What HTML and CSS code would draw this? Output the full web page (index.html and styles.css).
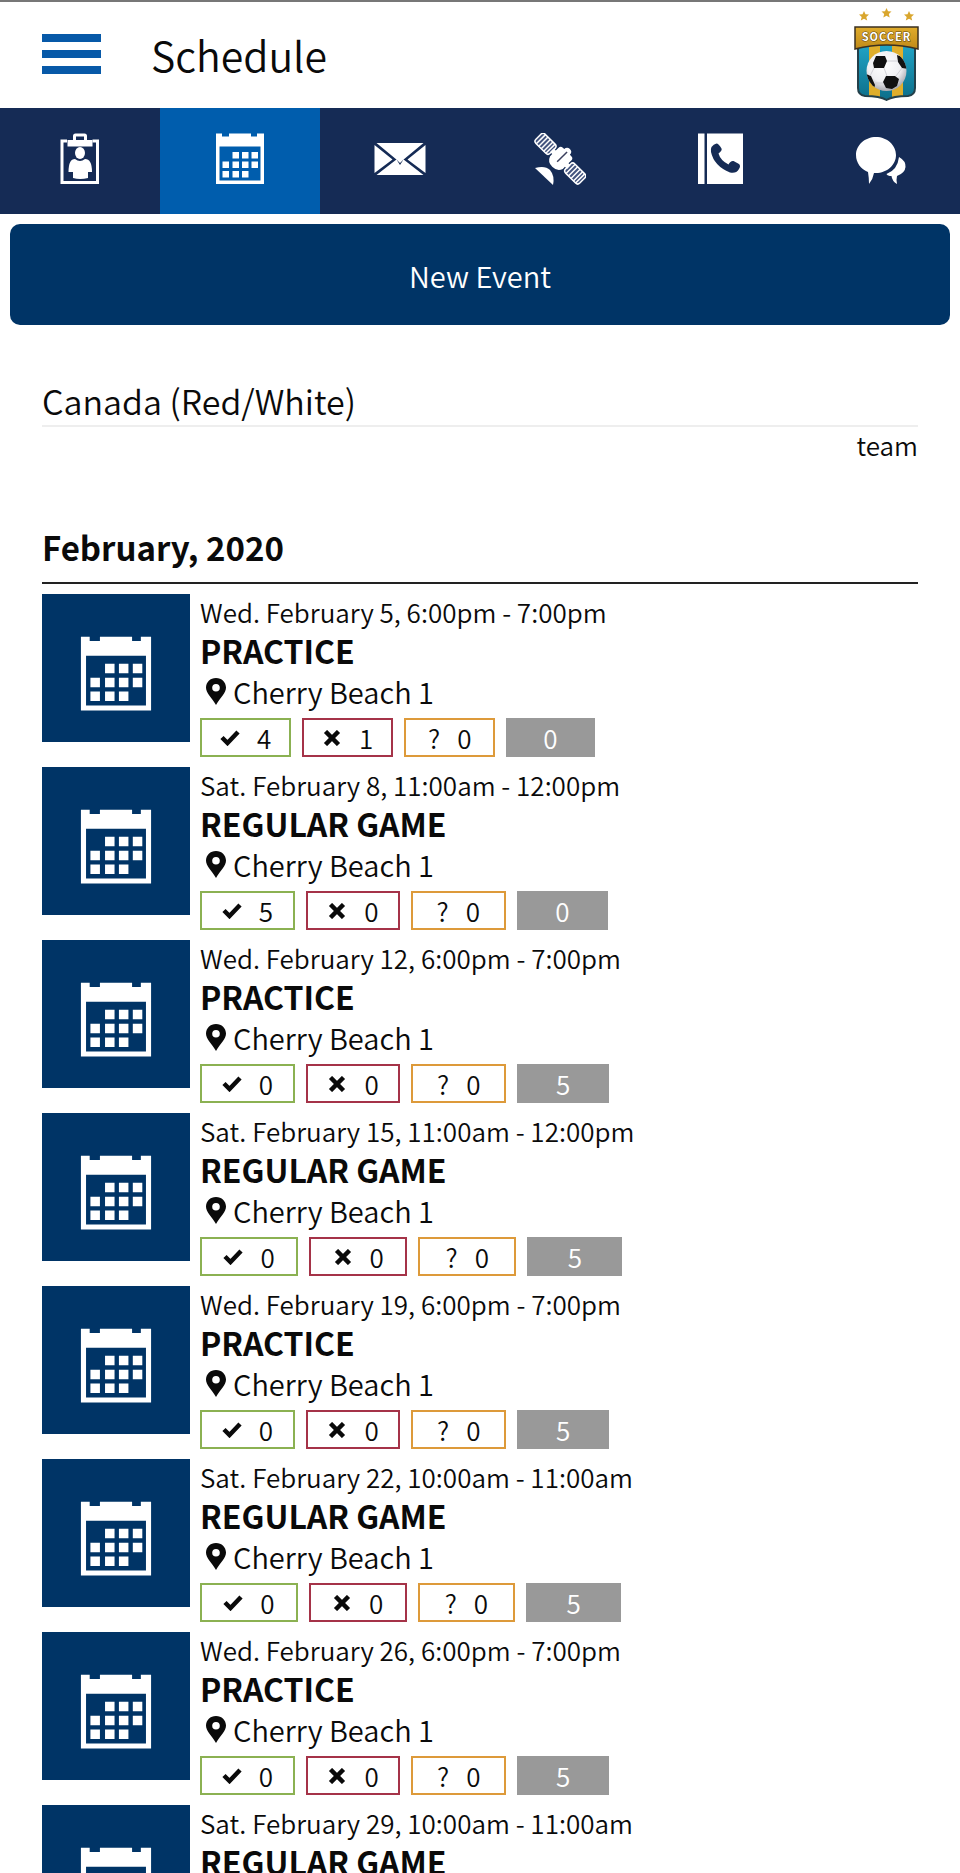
FILE: index.html
```
<!DOCTYPE html>
<html lang="en">
<head>
    <meta charset="UTF-8">
    <meta name="viewport" content="width=device-width, initial-scale=1.0">
    <title>Schedule</title>
    <link rel="stylesheet" href="styles.css">
</head>
<body>

    <!-- shared icons -->
    <svg class="icon-defs" aria-hidden="true">
        <symbol id="icon-calendar" viewBox="0 0 52 52">
            <path fill="currentColor" fill-rule="evenodd" d="M2 .5h6v3h7v-3h22v3h6v-3h7V51H2ZM5.500 13.500v34h41v-34Z"/>
            <path fill="currentColor" d="M18.500 19H25v6.500h-6.500ZM28 19h6.500v6.500H28ZM37.500 19H44v6.500h-6.500ZM8.500 28.500H15V35H8.500ZM18.500 28.500H25V35h-6.500ZM28 28.500h6.500V35H28ZM37.500 28.500H44V35h-6.500ZM8.500 38H15v6.500H8.500ZM18.500 38H25v6.500h-6.500ZM28 38h6.500v6.500H28Z"/>
        </symbol>
        <symbol id="icon-pin" viewBox="0 0 20 27">
            <path fill="currentColor" fill-rule="evenodd" d="M10 0C4.300 0 0 4.200 0 9.600 0 15 5.500 19.500 10 27c4.500-7.500 10-12 10-17.400C20 4.200 15.700 0 10 0Zm0 6a3.800 3.800 0 1 1 0 7.600A3.800 3.800 0 0 1 10 6Z"/>
        </symbol>
        <symbol id="icon-check" viewBox="0 0 20 16">
            <path fill="none" stroke="currentColor" stroke-width="4.500" d="M2 7.500 7.500 13 18 2"/>
        </symbol>
        <symbol id="icon-cross" viewBox="0 0 20 16">
            <path fill="none" stroke="currentColor" stroke-width="4.500" d="m3.500 1.500 13 13M16.500 1.500l-13 13"/>
        </symbol>
    </svg>

    <header class="top-bar">
        <button class="menu-btn" type="button" aria-label="Menu">
            <span></span>
            <span></span>
            <span></span>
        </button>
        <h1>Schedule</h1>
        <svg class="crest" viewBox="0 0 66 94" role="img" aria-label="Soccer team crest">
            <defs>
                <linearGradient id="gold" x1="0" y1="0" x2="0" y2="1">
                    <stop offset="0" stop-color="#e0ac2c"/>
                    <stop offset="1" stop-color="#c08a18"/>
                </linearGradient>
                <linearGradient id="blue" x1="0" y1="0" x2="0" y2="1">
                    <stop offset="0" stop-color="#20a5c8"/>
                    <stop offset="1" stop-color="#0c6d88"/>
                </linearGradient>
                <radialGradient id="ball" cx=".45" cy=".35" r=".65">
                    <stop offset="0" stop-color="#fff"/>
                    <stop offset=".65" stop-color="#efeff2"/>
                    <stop offset="1" stop-color="#a9a9b0"/>
                </radialGradient>
                <clipPath id="shield">
                    <path d="M5 38h57v43q0 7-7 8-15 0-21.500 4Q27 89 12 89q-7-1-7-8Z"/>
                </clipPath>
                <clipPath id="ball-clip">
                    <circle cx="33.500" cy="64" r="20"/>
                </clipPath>
                <path id="star" d="m0-5 1.500 3.300 3.500.3-2.700 2.300.9 3.600L0 2.700l-3.200 1.800.9-3.600L-5-1.400l3.500-.3Z"/>
            </defs>
            <g fill="#d9a62e">
                <use href="#star" x="11" y="9"/>
                <use href="#star" x="33.500" y="6"/>
                <use href="#star" x="56" y="9"/>
            </g>
            <g clip-path="url(#shield)">
                <path fill="url(#blue)" d="M4 36h60v58H4Z"/>
                <path fill="#dfae2b" d="M16 36h11v58H16ZM39 36h11v58H39Z"/>
            </g>
            <path fill="none" stroke="#24404a" stroke-width="2" d="M5 38v43q0 7 7 8 15 0 21.500 4Q40 89 55 89q7-1 7-8V38"/>
            <path fill="url(#gold)" stroke="#3b3020" stroke-width="1.500" d="M2 20h63v22q-31-8-63 0Z"/>
            <circle cx="33.500" cy="64" r="20" fill="url(#ball)"/>
            <g fill="#111" clip-path="url(#ball-clip)">
                <path d="m23 49 9 0 2 5-3 7-10 0-1-5ZM44 48l8 3 3 11-6-1-4-6ZM33 69h9l4 3-2 7-5 3-6-1-3-6ZM13 67l5 2 4 9-1 4-6-5Z"/>
            </g>
            <path fill="none" stroke="#c9c9cf" stroke-width=".8" d="M34 54h11M31 61l3 8M49 61l-6 8M21 61l-4 8M30 76h-8"/>
            <text x="33.500" y="34" text-anchor="middle">SOCCER</text>
        </svg>
    </header>

    <nav class="tabs" aria-label="Team sections">
        <a href="#roster" aria-label="Roster">
            <svg viewBox="0 0 52 52">
                <path fill="none" stroke="currentColor" stroke-width="3" d="M13 8H8v41.500h35.500V8h-5"/>
                <path fill="currentColor" fill-rule="evenodd" d="M13.500 7H19V3q0-2.500 2.500-2.500h9Q33 .5 33 3v4h5.500v6.500h-25ZM22 3.500V7h8V3.500Z"/>
                <ellipse cx="26" cy="20" rx="5" ry="6" fill="currentColor"/>
                <path fill="currentColor" d="M21 26q5 4 10 0 7 0 7 13h-4v6q-8 2-15 0v-6h-4.500q0-13 6.500-13Z"/>
            </svg>
        </a>
        <a class="active" href="#schedule" aria-label="Schedule" aria-current="page">
            <svg><use href="#icon-calendar"/></svg>
        </a>
        <a href="#messages" aria-label="Messages">
            <svg viewBox="0 0 52 52">
                <path fill="currentColor" d="M2.500 10h47L29 27l-3 3-3-3ZM.5 12l18 14.500L.5 40ZM51.500 12v28l-18-13.500ZM20.500 28l2-1.500 3.500 5.500 3.500-5.500 2 1.500 18 14h-47Z"/>
            </svg>
        </a>
        <a href="#tracker" aria-label="Tracker">
            <svg viewBox="0 0 52 52">
                <g transform="rotate(45 26 26)">
                    <g fill="#44557f" stroke="currentColor" stroke-width="1.500">
                        <rect x="-5" y="19" width="20" height="13" rx="3"/>
                        <rect x="37" y="19" width="20" height="13" rx="3"/>
                        <path d="M-1.500 19v13M2 19v13M5.500 19v13M9 19v13M12 19v13M40.500 19v13M44 19v13M47.500 19v13M51 19v13M54 19v13"/>
                    </g>
                    <path fill="currentColor" d="M14 23h3v-4q0-3 3-3h2q0-4 4-4t4 4h2q3 0 3 3v4h3v5h-3v3q-2 6-9 6t-9-6v-3h-3Z"/>
                    <path stroke="#3a3f5c" stroke-width="1.500" d="M26 16v14"/>
                </g>
                <path fill="currentColor" d="M1 35q10-3 15 2 5 6 3 15Z"/>
            </svg>
        </a>
        <a href="#contacts" aria-label="Contacts">
            <svg viewBox="0 0 52 52">
                <path fill="currentColor" d="M4 .5h6.500V51H4ZM13 .5h36V51H13Z"/>
                <path fill="#152b55" d="M17.500 14q2-3 5-3.500 2 0 5 5 1 2-3 5 2 7 10 11 2-4 5-3.500l5.500 3q2 2 0 5-3 5-9 3.500Q20 33 17 19q-.5-3 .5-5Z"/>
            </svg>
        </a>
        <a href="#chat" aria-label="Chat">
            <svg viewBox="0 0 52 52">
                <path fill="currentColor" d="M22 4c11 0 20 8 20 18s-9 18-20 18h-2q-1 6-5 11 0-6-1-12C7 36 2 30 2 22 2 12 11 4 22 4Z"/>
                <path fill="currentColor" d="M45 24q7 4 6.500 10-.5 6-8.500 9-1 4 0 8-5-3-5.500-8-4 0-5-2 11-4 12.500-17Z"/>
            </svg>
        </a>
    </nav>

    <main>
        <button class="new-event" type="button">New Event</button>

        <section class="schedule">
            <h2 class="team-name">Canada (Red/White)</h2>
            <p class="team-label">team</p>

            <h3 class="month">February, 2020</h3>

            <ul class="events">
                <li class="event">
                    <a class="tile" href="#event-1" aria-label="February 5"><svg><use href="#icon-calendar"/></svg></a>
                    <div class="details">
                        <p class="date">Wed. February 5, 6:00pm - 7:00pm</p>
                        <h4>PRACTICE</h4>
                        <p class="place"><svg><use href="#icon-pin"/></svg>Cherry Beach 1</p>
                        <div class="badges">
                            <span class="badge yes"><svg><use href="#icon-check"/></svg>4</span>
                            <span class="badge no"><svg><use href="#icon-cross"/></svg>1</span>
                            <span class="badge maybe"><span>?</span>0</span>
                            <span class="badge none">0</span>
                        </div>
                    </div>
                </li>
                <li class="event">
                    <a class="tile" href="#event-2" aria-label="February 8"><svg><use href="#icon-calendar"/></svg></a>
                    <div class="details">
                        <p class="date">Sat. February 8, 11:00am - 12:00pm</p>
                        <h4>REGULAR GAME</h4>
                        <p class="place"><svg><use href="#icon-pin"/></svg>Cherry Beach 1</p>
                        <div class="badges">
                            <span class="badge yes"><svg><use href="#icon-check"/></svg>5</span>
                            <span class="badge no"><svg><use href="#icon-cross"/></svg>0</span>
                            <span class="badge maybe"><span>?</span>0</span>
                            <span class="badge none">0</span>
                        </div>
                    </div>
                </li>
                <li class="event">
                    <a class="tile" href="#event-3" aria-label="February 12"><svg><use href="#icon-calendar"/></svg></a>
                    <div class="details">
                        <p class="date">Wed. February 12, 6:00pm - 7:00pm</p>
                        <h4>PRACTICE</h4>
                        <p class="place"><svg><use href="#icon-pin"/></svg>Cherry Beach 1</p>
                        <div class="badges">
                            <span class="badge yes"><svg><use href="#icon-check"/></svg>0</span>
                            <span class="badge no"><svg><use href="#icon-cross"/></svg>0</span>
                            <span class="badge maybe"><span>?</span>0</span>
                            <span class="badge none">5</span>
                        </div>
                    </div>
                </li>
                <li class="event">
                    <a class="tile" href="#event-4" aria-label="February 15"><svg><use href="#icon-calendar"/></svg></a>
                    <div class="details">
                        <p class="date">Sat. February 15, 11:00am - 12:00pm</p>
                        <h4>REGULAR GAME</h4>
                        <p class="place"><svg><use href="#icon-pin"/></svg>Cherry Beach 1</p>
                        <div class="badges">
                            <span class="badge yes"><svg><use href="#icon-check"/></svg>0</span>
                            <span class="badge no"><svg><use href="#icon-cross"/></svg>0</span>
                            <span class="badge maybe"><span>?</span>0</span>
                            <span class="badge none">5</span>
                        </div>
                    </div>
                </li>
                <li class="event">
                    <a class="tile" href="#event-5" aria-label="February 19"><svg><use href="#icon-calendar"/></svg></a>
                    <div class="details">
                        <p class="date">Wed. February 19, 6:00pm - 7:00pm</p>
                        <h4>PRACTICE</h4>
                        <p class="place"><svg><use href="#icon-pin"/></svg>Cherry Beach 1</p>
                        <div class="badges">
                            <span class="badge yes"><svg><use href="#icon-check"/></svg>0</span>
                            <span class="badge no"><svg><use href="#icon-cross"/></svg>0</span>
                            <span class="badge maybe"><span>?</span>0</span>
                            <span class="badge none">5</span>
                        </div>
                    </div>
                </li>
                <li class="event">
                    <a class="tile" href="#event-6" aria-label="February 22"><svg><use href="#icon-calendar"/></svg></a>
                    <div class="details">
                        <p class="date">Sat. February 22, 10:00am - 11:00am</p>
                        <h4>REGULAR GAME</h4>
                        <p class="place"><svg><use href="#icon-pin"/></svg>Cherry Beach 1</p>
                        <div class="badges">
                            <span class="badge yes"><svg><use href="#icon-check"/></svg>0</span>
                            <span class="badge no"><svg><use href="#icon-cross"/></svg>0</span>
                            <span class="badge maybe"><span>?</span>0</span>
                            <span class="badge none">5</span>
                        </div>
                    </div>
                </li>
                <li class="event">
                    <a class="tile" href="#event-7" aria-label="February 26"><svg><use href="#icon-calendar"/></svg></a>
                    <div class="details">
                        <p class="date">Wed. February 26, 6:00pm - 7:00pm</p>
                        <h4>PRACTICE</h4>
                        <p class="place"><svg><use href="#icon-pin"/></svg>Cherry Beach 1</p>
                        <div class="badges">
                            <span class="badge yes"><svg><use href="#icon-check"/></svg>0</span>
                            <span class="badge no"><svg><use href="#icon-cross"/></svg>0</span>
                            <span class="badge maybe"><span>?</span>0</span>
                            <span class="badge none">5</span>
                        </div>
                    </div>
                </li>
                <li class="event">
                    <a class="tile" href="#event-8" aria-label="February 29"><svg><use href="#icon-calendar"/></svg></a>
                    <div class="details">
                        <p class="date">Sat. February 29, 10:00am - 11:00am</p>
                        <h4>REGULAR GAME</h4>
                    </div>
                </li>
            </ul>
        </section>
    </main>

</body>
</html>
```
FILE: styles.css
```
* {
    margin: 0;
    padding: 0;
    box-sizing: border-box;
}

body {
    font-family: "Noto Sans CJK SC", "Noto Sans", sans-serif;
    font-size: 26px;
    font-weight: 350;
    line-height: 36px;
    background: #fff;
    color: #0a0a0a;
    height: 100vh;
    overflow: hidden;
}

button {
    font: inherit;
    border: none;
    cursor: pointer;
}

a {
    color: inherit;
    text-decoration: none;
}

svg {
    display: block;
}

.icon-defs {
    display: none;
}

/* header */
.top-bar {
    display: flex;
    align-items: center;
    height: 108px;
    padding: 0 41px 2px 42px;
    border-top: 2px solid #777;
}

.menu-btn {
    display: flex;
    flex-direction: column;
    gap: 8px;
    width: 59px;
    background: none;
}

.menu-btn span {
    height: 8px;
    background: #0759a8;
}

.top-bar h1 {
    flex: 1;
    margin-left: 50px;
    font-size: 41px;
    font-weight: inherit;
    line-height: 60px;
}

.crest {
    width: 66px;
    height: 94px;
}

.crest text {
    font-size: 11px;
    font-weight: 700;
    letter-spacing: 1px;
    fill: #fff;
    stroke: #5b4312;
    stroke-width: 1px;
    paint-order: stroke;
}

/* tabs */
.tabs {
    display: grid;
    grid-template-columns: repeat(6, 1fr);
    height: 106px;
    background: #152b55;
    color: #fff;
}

.tabs a {
    display: flex;
    align-items: center;
    justify-content: center;
    padding-bottom: 4px;
}

.tabs .active {
    background: #005dad;
}

.tabs svg {
    width: 52px;
    height: 52px;
}

.new-event {
    display: block;
    width: calc(100% - 20px);
    height: 101px;
    margin: 10px 10px 0;
    border-radius: 10px;
    background: #003466;
    color: #fff;
    font-size: 29px;
}

/* schedule */
.schedule {
    padding: 52px 42px 0;
}

.team-name {
    font-size: 34px;
    font-weight: inherit;
    line-height: 48px;
    border-bottom: 2px solid #eee;
}

.team-label {
    text-align: right;
}

.month {
    margin-top: 58px;
    padding-bottom: 9px;
    font-size: 33px;
    font-weight: 700;
    line-height: 52px;
    border-bottom: 2px solid #222;
}

.events {
    list-style: none;
    margin-top: 10px;
}

.event {
    display: flex;
    gap: 10px;
    height: 173px;
}

.tile {
    display: flex;
    justify-content: center;
    align-items: center;
    flex: none;
    width: 148px;
    height: 148px;
    padding-top: 12px;
    background: #003466;
    color: #fff;
}

.tile svg {
    width: 76px;
    height: 76px;
}

.date {
    line-height: 36px;
}

.details h4 {
    font-size: 32px;
    font-weight: 700;
    line-height: 40px;
}

.place {
    display: flex;
    align-items: center;
    gap: 7px;
    padding-left: 6px;
    font-size: 29px;
    line-height: 42px;
}

.place svg {
    width: 20px;
    height: 27px;
}

.badges {
    display: grid;
    grid-template-columns: 31fr 31fr 31fr 30fr;
    gap: 11px;
    margin: 6px 12px 0 0;
}

.badge {
    display: flex;
    align-items: center;
    justify-content: center;
    gap: 17px;
    height: 39px;
    border: 2px solid;
}

.badge svg {
    width: 20px;
    height: 16px;
}

.yes {
    border-color: #8bb152;
}

.no {
    border-color: #a53348;
}

.maybe {
    border-color: #dd9a3a;
}

.none {
    border-color: #999;
    background: #999;
    color: #fff;
}
```
